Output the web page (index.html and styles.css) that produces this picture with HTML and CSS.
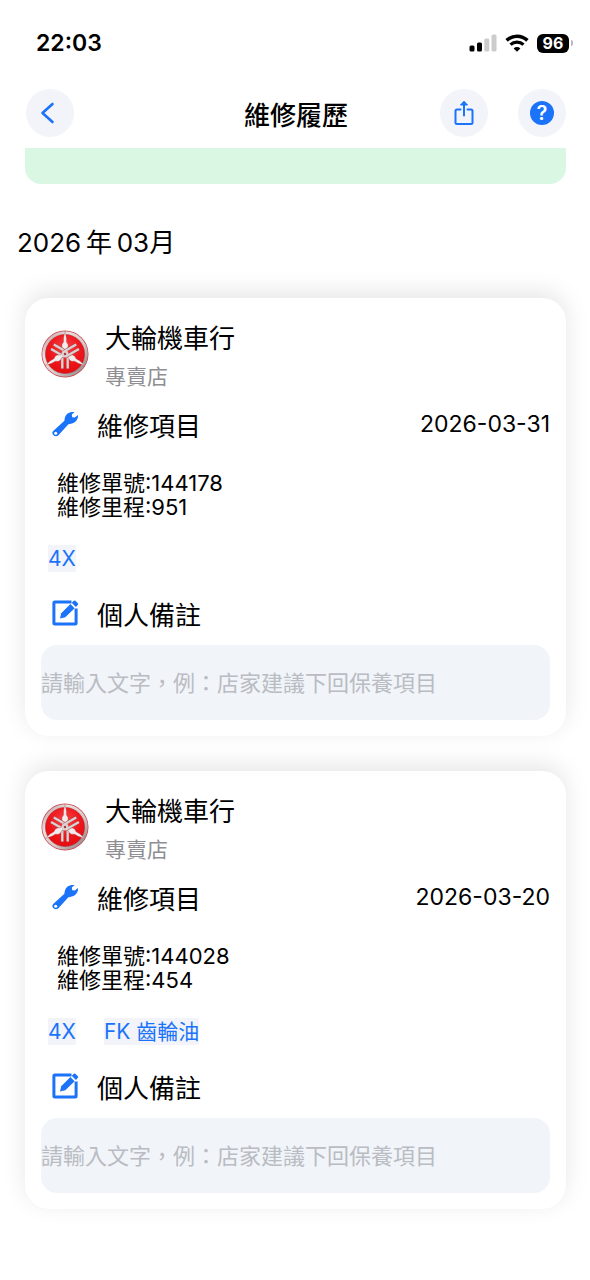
FILE: index.html
```html
<!DOCTYPE html>
<html lang="zh-Hant">
<head>
  <meta charset="UTF-8">
  <meta name="viewport" content="width=device-width, initial-scale=1">
  <title>維修履歷</title>
  <link rel="stylesheet" href="styles.css">
</head>
<body>
  <!-- shared icons -->
  <svg class="sprite" aria-hidden="true">
    <defs>
      <linearGradient id="silver" x1="0" y1="0" x2="1" y2="1">
        <stop offset="0" stop-color="#b08e90"/>
        <stop offset="0.3" stop-color="#eadfdf"/>
        <stop offset="0.6" stop-color="#d6caca"/>
        <stop offset="1" stop-color="#7f7274"/>
      </linearGradient>
      <radialGradient id="red" cx="0.5" cy="0.35" r="0.65">
        <stop offset="0" stop-color="#f4464c"/>
        <stop offset="0.6" stop-color="#f0161b"/>
        <stop offset="1" stop-color="#e20d12"/>
      </radialGradient>
    </defs>
    <symbol id="logo" viewBox="0 0 48 48">
      <circle cx="24" cy="24" r="23.5" fill="#c9434a"/>
      <circle cx="24" cy="24" r="22.8" fill="url(#silver)"/>
      <circle cx="24" cy="24" r="19.6" fill="url(#red)" stroke="#a52a2e" stroke-width="0.5"/>
      <g id="fork">
        <path d="M21.3 24 V38.8 M26.7 24 V38.8" stroke="#a04a4d" stroke-width="3"/>
        <path d="M21.3 24 V38.5 M26.7 24 V38.5" stroke="#ddd0d0" stroke-width="2.3"/>
        <path d="M24 1 L25.4 8 V12 L27 14.5 V17 L25.4 19.5 V25 H22.6 V19.5 L21 17 V14.5 L22.6 12 V8 Z" fill="#f4ecec" stroke="#a04a4d" stroke-width="0.3"/>
      </g>
      <use href="#fork" transform="rotate(120 24 24)"/>
      <use href="#fork" transform="rotate(240 24 24)"/>
      <circle cx="24" cy="24" r="3.4" fill="#ddd0d0"/>
      <circle cx="24" cy="24" r="1.2" fill="#a33b3f"/>
    </symbol>
    <symbol id="wrench" viewBox="0 0 28 28">
      <path d="M2.2 21 L13.4 10.8 C13.5 8.5 14.2 5.6 16.3 3.8 C18.3 2.1 20.8 1.7 23.6 2 L20.8 4.6 L21.2 7.2 L23.8 7.6 L27 5 C27.4 7.6 26.2 10.4 24 12 C22 13.5 19.6 13.7 17.4 14.3 L7.4 25.2 C6.2 26.5 4 26.7 2.5 25.3 C1 23.9 1 22.1 2.2 21 Z" fill="#1a73f8"/>
      <circle cx="4.7" cy="23.2" r="1.5" fill="#fff"/>
    </symbol>
    <symbol id="edit" viewBox="0 0 28 28">
      <path d="M20.5 2.9 H3.9 Q2.9 2.9 2.9 3.9 V24.1 Q2.9 25.1 3.9 25.1 H24.1 Q25.1 25.1 25.1 24.1 V9.5" fill="none" stroke="#1a73f8" stroke-width="3"/>
      <path d="M9 19.4 L10.2 14.2 L19.4 5 L23.6 9.2 L14.3 18.3 Z" fill="#1a73f8"/>
      <path d="M20.7 3.8 L22.8 1.8 Q23.6 1.1 24.4 1.8 L26.9 4.3 Q27.5 5 26.9 5.8 L24.9 7.9 Z" fill="#1a73f8"/>
    </symbol>
  </svg>

  <div class="status-bar">
    <span class="time">22:03</span>
    <div class="status-icons">
      <svg width="28" height="18" viewBox="0 0 28 18" aria-hidden="true">
        <rect x="0.5" y="11.5" width="5" height="6" rx="1.5" fill="#000"/>
        <rect x="8" y="8.5" width="5" height="9" rx="1.5" fill="#000"/>
        <rect x="15.3" y="4.5" width="5" height="13" rx="1.5" fill="#ccc"/>
        <rect x="22.5" y="0.5" width="5" height="17" rx="1.5" fill="#ccc"/>
      </svg>
      <svg width="24" height="18" viewBox="0 0 24 18" aria-hidden="true">
        <path d="M1.6 6.4 A15 15 0 0 1 22.4 6.4" fill="none" stroke="#000" stroke-width="3.6"/>
        <path d="M5.5 10.7 A9.4 9.4 0 0 1 18.5 10.7" fill="none" stroke="#000" stroke-width="3.2"/>
        <path d="M12 17.8 L8.6 14.4 A4.9 4.9 0 0 1 15.4 14.4 Z" fill="#000"/>
      </svg>
      <div class="battery"><span class="battery-level">96</span><span class="battery-tip"></span></div>
    </div>
  </div>

  <header class="nav">
    <button type="button" class="round-btn" aria-label="返回">
      <svg width="24" height="24" viewBox="0 0 24 24"><path d="M16.5 3 L6.5 12 L16.5 21" fill="none" stroke="#1a73f8" stroke-width="2.6" stroke-linecap="round" stroke-linejoin="round"/></svg>
    </button>
    <h1>維修履歷</h1>
    <div class="nav-actions">
      <button type="button" class="round-btn" aria-label="分享">
        <svg width="24" height="26" viewBox="0 0 24 26"><path d="M8.5 9.5 H5 Q3.500 9.5 3.5 11 V22.5 Q3.5 24 5 24 H19 Q20.5 24 20.5 22.5 V11 Q20.5 9.5 19 9.5 H15.5 M12 15.5 V3" fill="none" stroke="#1a73f8" stroke-width="2" stroke-linecap="round"/><path d="M8.5 5 L12 1.2 L15.5 5 Z" fill="#1a73f8" stroke="#1a73f8" stroke-linejoin="round"/></svg>
      </button>
      <button type="button" class="round-btn" aria-label="說明">
        <span class="help">?</span>
      </button>
    </div>
  </header>

  <main>
    <div class="banner"></div>
    <h2 class="month">2026&thinsp;年&thinsp;03月</h2>

    <article class="card">
      <div class="shop">
        <svg class="logo" aria-hidden="true"><use href="#logo"/></svg>
        <div>
          <h3>大輪機車行</h3>
          <p class="shop-type">專賣店</p>
        </div>
      </div>
      <div class="row">
        <svg class="icon" aria-hidden="true"><use href="#wrench"/></svg>
        <h4>維修項目</h4>
        <time datetime="2026-03-31">2026-03-31</time>
      </div>
      <div class="info">
        <p>維修單號:144178</p>
        <p>維修里程:951</p>
      </div>
      <div class="tags">
        <a href="#">4X</a>
      </div>
      <div class="row note-row">
        <svg class="icon" aria-hidden="true"><use href="#edit"/></svg>
        <label for="note1">個人備註</label>
      </div>
      <input type="text" id="note1" class="note" placeholder="請輸入文字，例：店家建議下回保養項目">
    </article>

    <article class="card">
      <div class="shop">
        <svg class="logo" aria-hidden="true"><use href="#logo"/></svg>
        <div>
          <h3>大輪機車行</h3>
          <p class="shop-type">專賣店</p>
        </div>
      </div>
      <div class="row">
        <svg class="icon" aria-hidden="true"><use href="#wrench"/></svg>
        <h4>維修項目</h4>
        <time datetime="2026-03-20">2026-03-20</time>
      </div>
      <div class="info">
        <p>維修單號:144028</p>
        <p>維修里程:454</p>
      </div>
      <div class="tags">
        <a href="#">4X</a>
        <a href="#">FK 齒輪油</a>
      </div>
      <div class="row note-row">
        <svg class="icon" aria-hidden="true"><use href="#edit"/></svg>
        <label for="note2">個人備註</label>
      </div>
      <input type="text" id="note2" class="note" placeholder="請輸入文字，例：店家建議下回保養項目">
    </article>
  </main>
</body>
</html>
```

FILE: styles.css
```css
* {
  box-sizing: border-box;
}

body {
  margin: 0;
  background: #fff;
  color: #000;
  font-family: Inter, "Noto Sans CJK TC", sans-serif;
  font-size: 22px;
}

h1, h2, h3, h4, p {
  margin: 0;
  font-weight: 400;
}

.sprite {
  position: absolute;
  width: 0;
  height: 0;
}

.status-bar {
  display: flex;
  justify-content: space-between;
  align-items: center;
  height: 86px;
  padding: 0 17px 0 36px;
}

.time {
  font-size: 23px;
  font-weight: 600;
}

.status-icons {
  display: flex;
  align-items: center;
  gap: 8px;
}

.battery {
  display: flex;
  align-items: center;
  gap: 2px;
}

.battery-level {
  width: 32px;
  border-radius: 6px;
  background: #000;
  color: #fff;
  font-size: 16px;
  font-weight: 700;
  line-height: 19px;
  text-align: center;
}

.battery-tip {
  width: 2px;
  height: 6px;
  border-radius: 0 2px 2px 0;
  background: #bbb;
}

.nav {
  display: grid;
  grid-template-columns: 1fr auto 1fr;
  align-items: center;
  height: 62px;
  padding: 0 24px 8px 26px;
}

.nav h1 {
  font-size: 26px;
  font-weight: 500;
}

.nav-actions {
  display: flex;
  justify-content: flex-end;
  gap: 30px;
}

.round-btn {
  display: flex;
  align-items: center;
  justify-content: center;
  width: 48px;
  height: 48px;
  padding: 0;
  border: none;
  border-radius: 50%;
  background: #f2f4fa;
  cursor: pointer;
}

.nav > .round-btn {
  padding-right: 4px;
}

.help {
  width: 24px;
  border-radius: 50%;
  background: #1a73f8;
  color: #fff;
  font-family: Inter, sans-serif;
  font-size: 20px;
  font-weight: 600;
  line-height: 24px;
}

main {
  padding: 0 24px 72px 25px;
}

.banner {
  height: 36px;
  border-radius: 0 0 16px 16px;
  background: #daf7e4;
}

.month {
  margin: 40px -8px 36px;
  font-size: 26px;
  line-height: 38px;
}

.card {
  margin-bottom: 35px;
  padding: 24px 16px 16px;
  border-radius: 24px;
  background: #fff;
  box-shadow: 0 -6px 24px rgba(0, 0, 0, 0.1);
}

.shop {
  display: flex;
  align-items: center;
  gap: 16px;
}

.logo {
  width: 48px;
  height: 48px;
  margin-bottom: 6px;
}

.shop h3 {
  font-size: 26px;
  line-height: 34px;
}

.shop-type {
  margin-top: 6px;
  color: #8e8e93;
  font-size: 21px;
  line-height: 30px;
}

.row {
  display: flex;
  align-items: center;
  height: 48px;
  margin-top: 8px;
  padding-left: 10px;
}

.icon {
  width: 28px;
  height: 28px;
  margin-right: 18px;
}

.row h4, .row label {
  font-size: 26px;
}

.row time {
  margin-left: auto;
  font-size: 23px;
}

.info {
  padding: 23px 16px 26px;
  line-height: 24px;
}

.tags {
  display: flex;
  gap: 28px;
  padding-left: 7px;
}

.tags a {
  background: #f2f4fa;
  color: #1a73f8;
  font-size: 21px;
  line-height: 27px;
  text-decoration: none;
}

.note-row {
  margin-top: 17px;
}

.note {
  display: block;
  width: 100%;
  height: 75px;
  margin-top: 8px;
  padding: 0;
  border: none;
  border-radius: 16px;
  background: #f1f4f9;
  font: inherit;
}

.note::placeholder {
  color: #b9bcc2;
}
```
